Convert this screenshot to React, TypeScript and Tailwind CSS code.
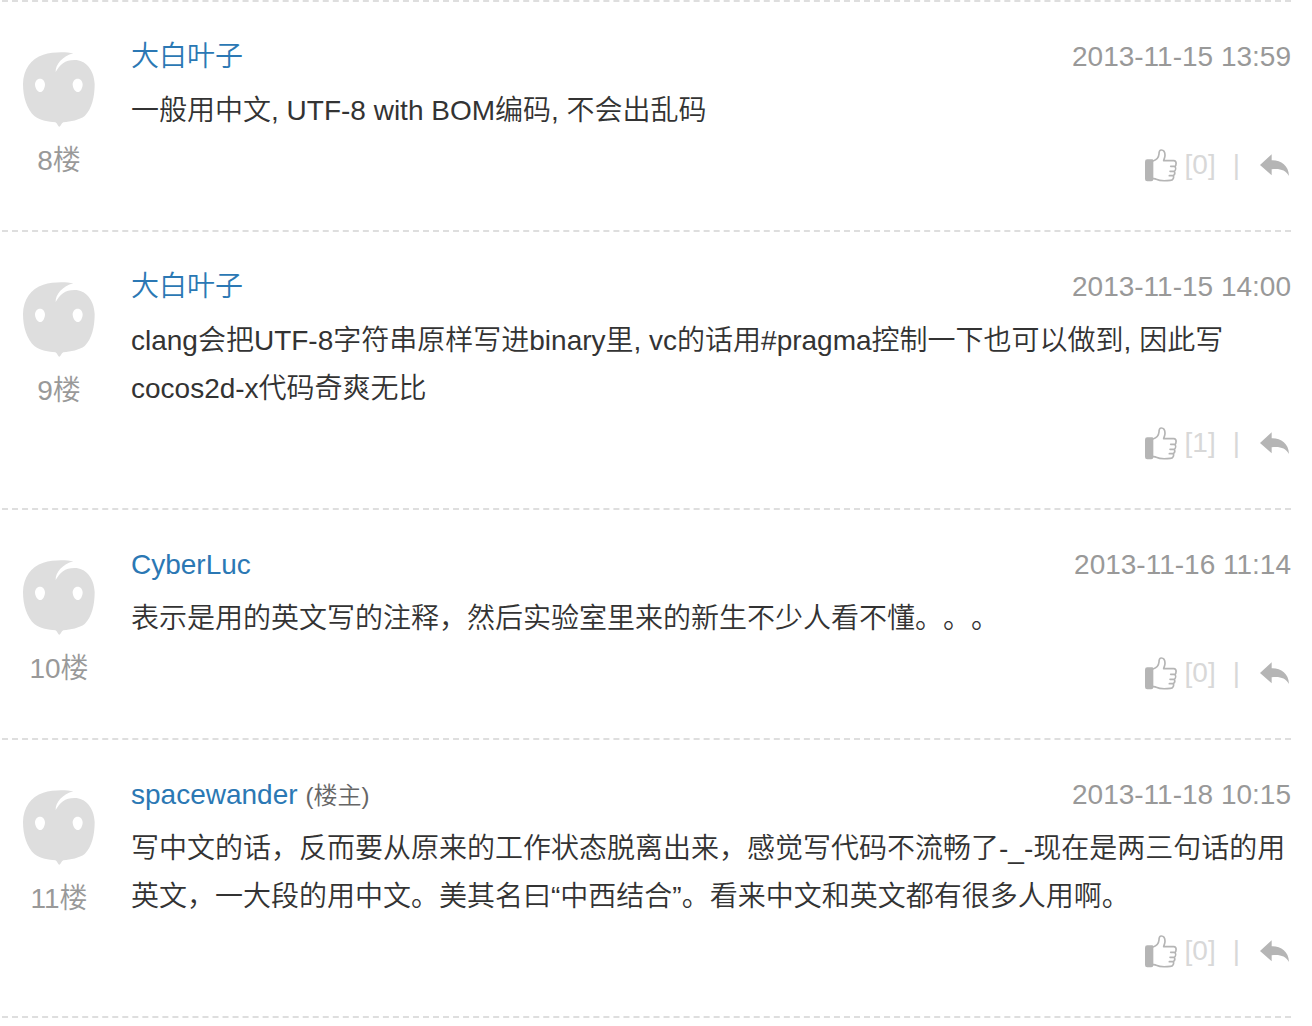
type Comment = {
  floor: number;
  author: string;
  isOwner?: boolean;
  time: string;
  likes: number;
  body: string;
};

const comments: Comment[] = [
  {
    floor: 8,
    author: "大白叶子",
    time: "2013-11-15 13:59",
    likes: 0,
    body: "一般用中文, UTF-8 with BOM编码, 不会出乱码",
  },
  {
    floor: 9,
    author: "大白叶子",
    time: "2013-11-15 14:00",
    likes: 1,
    body: "clang会把UTF-8字符串原样写进binary里, vc的话用#pragma控制一下也可以做到, 因此写cocos2d-x代码奇爽无比",
  },
  {
    floor: 10,
    author: "CyberLuc",
    time: "2013-11-16 11:14",
    likes: 0,
    body: "表示是用的英文写的注释，然后实验室里来的新生不少人看不懂。。。",
  },
  {
    floor: 11,
    author: "spacewander",
    isOwner: true,
    time: "2013-11-18 10:15",
    likes: 0,
    body: "写中文的话，反而要从原来的工作状态脱离出来，感觉写代码不流畅了-_-现在是两三句话的用英文，一大段的用中文。美其名曰“中西结合”。看来中文和英文都有很多人用啊。",
  },
];

function Avatar() {
  return (
    <svg viewBox="36 33 222 228" className="h-[76px] w-[74px]" aria-hidden="true">
      <path
        fill="#dedede"
        d="M190 40C168 35 128 35 100 44C62 56 40 88 39 132C39 170 50 208 74 229C92 242 116 246 136 247C142 249 144 260 148 260C152 260 154 249 160 247C182 245 208 240 224 228C246 206 254 170 254 132C252 88 226 60 194 60C164 60 150 74 137 96C136 74 158 48 190 40Z"
      />
      <path
        fill="#fff"
        d="M90 116C99 116 105 124 105 134C104 146 98 156 91 156C83 156 76 146 75 134C75 124 81 116 90 116ZM203 116C212 116 218 124 218 134C217 146 211 156 204 156C196 156 189 146 188 134C188 124 194 116 203 116Z"
      />
    </svg>
  );
}

function ThumbIcon() {
  return (
    <svg viewBox="0 0 96 99" className="h-[33px] w-8" fill="none" aria-hidden="true">
      <path
        fill="#b5b5b5"
        d="M7 31H21Q25 31 25 35V91Q25 97 19 97H7Q0 97 0 90V38Q0 31 7 31Z"
      />
      <path
        stroke="#b5b5b5"
        strokeWidth="5"
        strokeLinejoin="round"
        strokeLinecap="round"
        d="M24 36C34 33 41 26 42 15C42 7 44 3 49 3C56 3 60 10 60 19C60 26 57 30 56 35H86C92 35 94 40 93 45C93 50 91 52 90 53C93 57 92 64 88 67C90 71 89 77 85 80C87 85 85 94 76 94C60 96 42 95 34 91Q29 88 24 89M90 52H77M88 67H75M85 80H73"
      />
    </svg>
  );
}

function ReplyIcon() {
  return (
    <svg viewBox="0 0 87 66" className="h-[22px] w-[29px]" aria-hidden="true">
      <path fill="#b5b5b5" d="M0 33L35 1V19C62 18 86 34 87 66C76 48 60 43 35 46V64Z" />
    </svg>
  );
}

function CommentRow({ comment }: { comment: Comment }) {
  return (
    <li className="flex border-t-2 border-dashed border-[#dedede] pb-[41px]">
      <div className="flex w-[114px] shrink-0 flex-col items-center pt-[49px] text-[#999]">
        <Avatar />
        <span className="mt-2 leading-[52px]">{comment.floor}楼</span>
      </div>
      <article className="ml-[15px] min-w-0 flex-1 pt-[31px] leading-[48px]">
        <header className="flex justify-between">
          <div>
            <a href="#author" className="text-[#2b78b4]">
              {comment.author}
            </a>
            {comment.isOwner && <span className="ml-2 text-2xl leading-none text-[#666]">(楼主)</span>}
          </div>
          <time className="text-[#999]">{comment.time}</time>
        </header>
        <p className="mt-1.5 text-[#333]">{comment.body}</p>
        <footer className="mt-1.5 flex items-center justify-end text-[#d8d8d8]">
          <button type="button" aria-label="赞" className="flex items-center gap-2">
            <ThumbIcon />
            <span>[{comment.likes}]</span>
          </button>
          <span className="ml-[17px] mr-5">|</span>
          <button type="button" aria-label="回复" className="mr-0.5">
            <ReplyIcon />
          </button>
        </footer>
      </article>
    </li>
  );
}

export default function App() {
  return (
    <main className="min-h-screen bg-white pl-0.5 pr-[21px] font-['Liberation_Sans','Noto_Sans_CJK_SC',sans-serif] text-[28px] font-[350] [text-spacing-trim:space-all]">
      <ul className="border-b-2 border-dashed border-[#dedede]" lang="zh-CN">
        {comments.map((comment) => (
          <CommentRow key={comment.floor} comment={comment} />
        ))}
      </ul>
    </main>
  );
}
